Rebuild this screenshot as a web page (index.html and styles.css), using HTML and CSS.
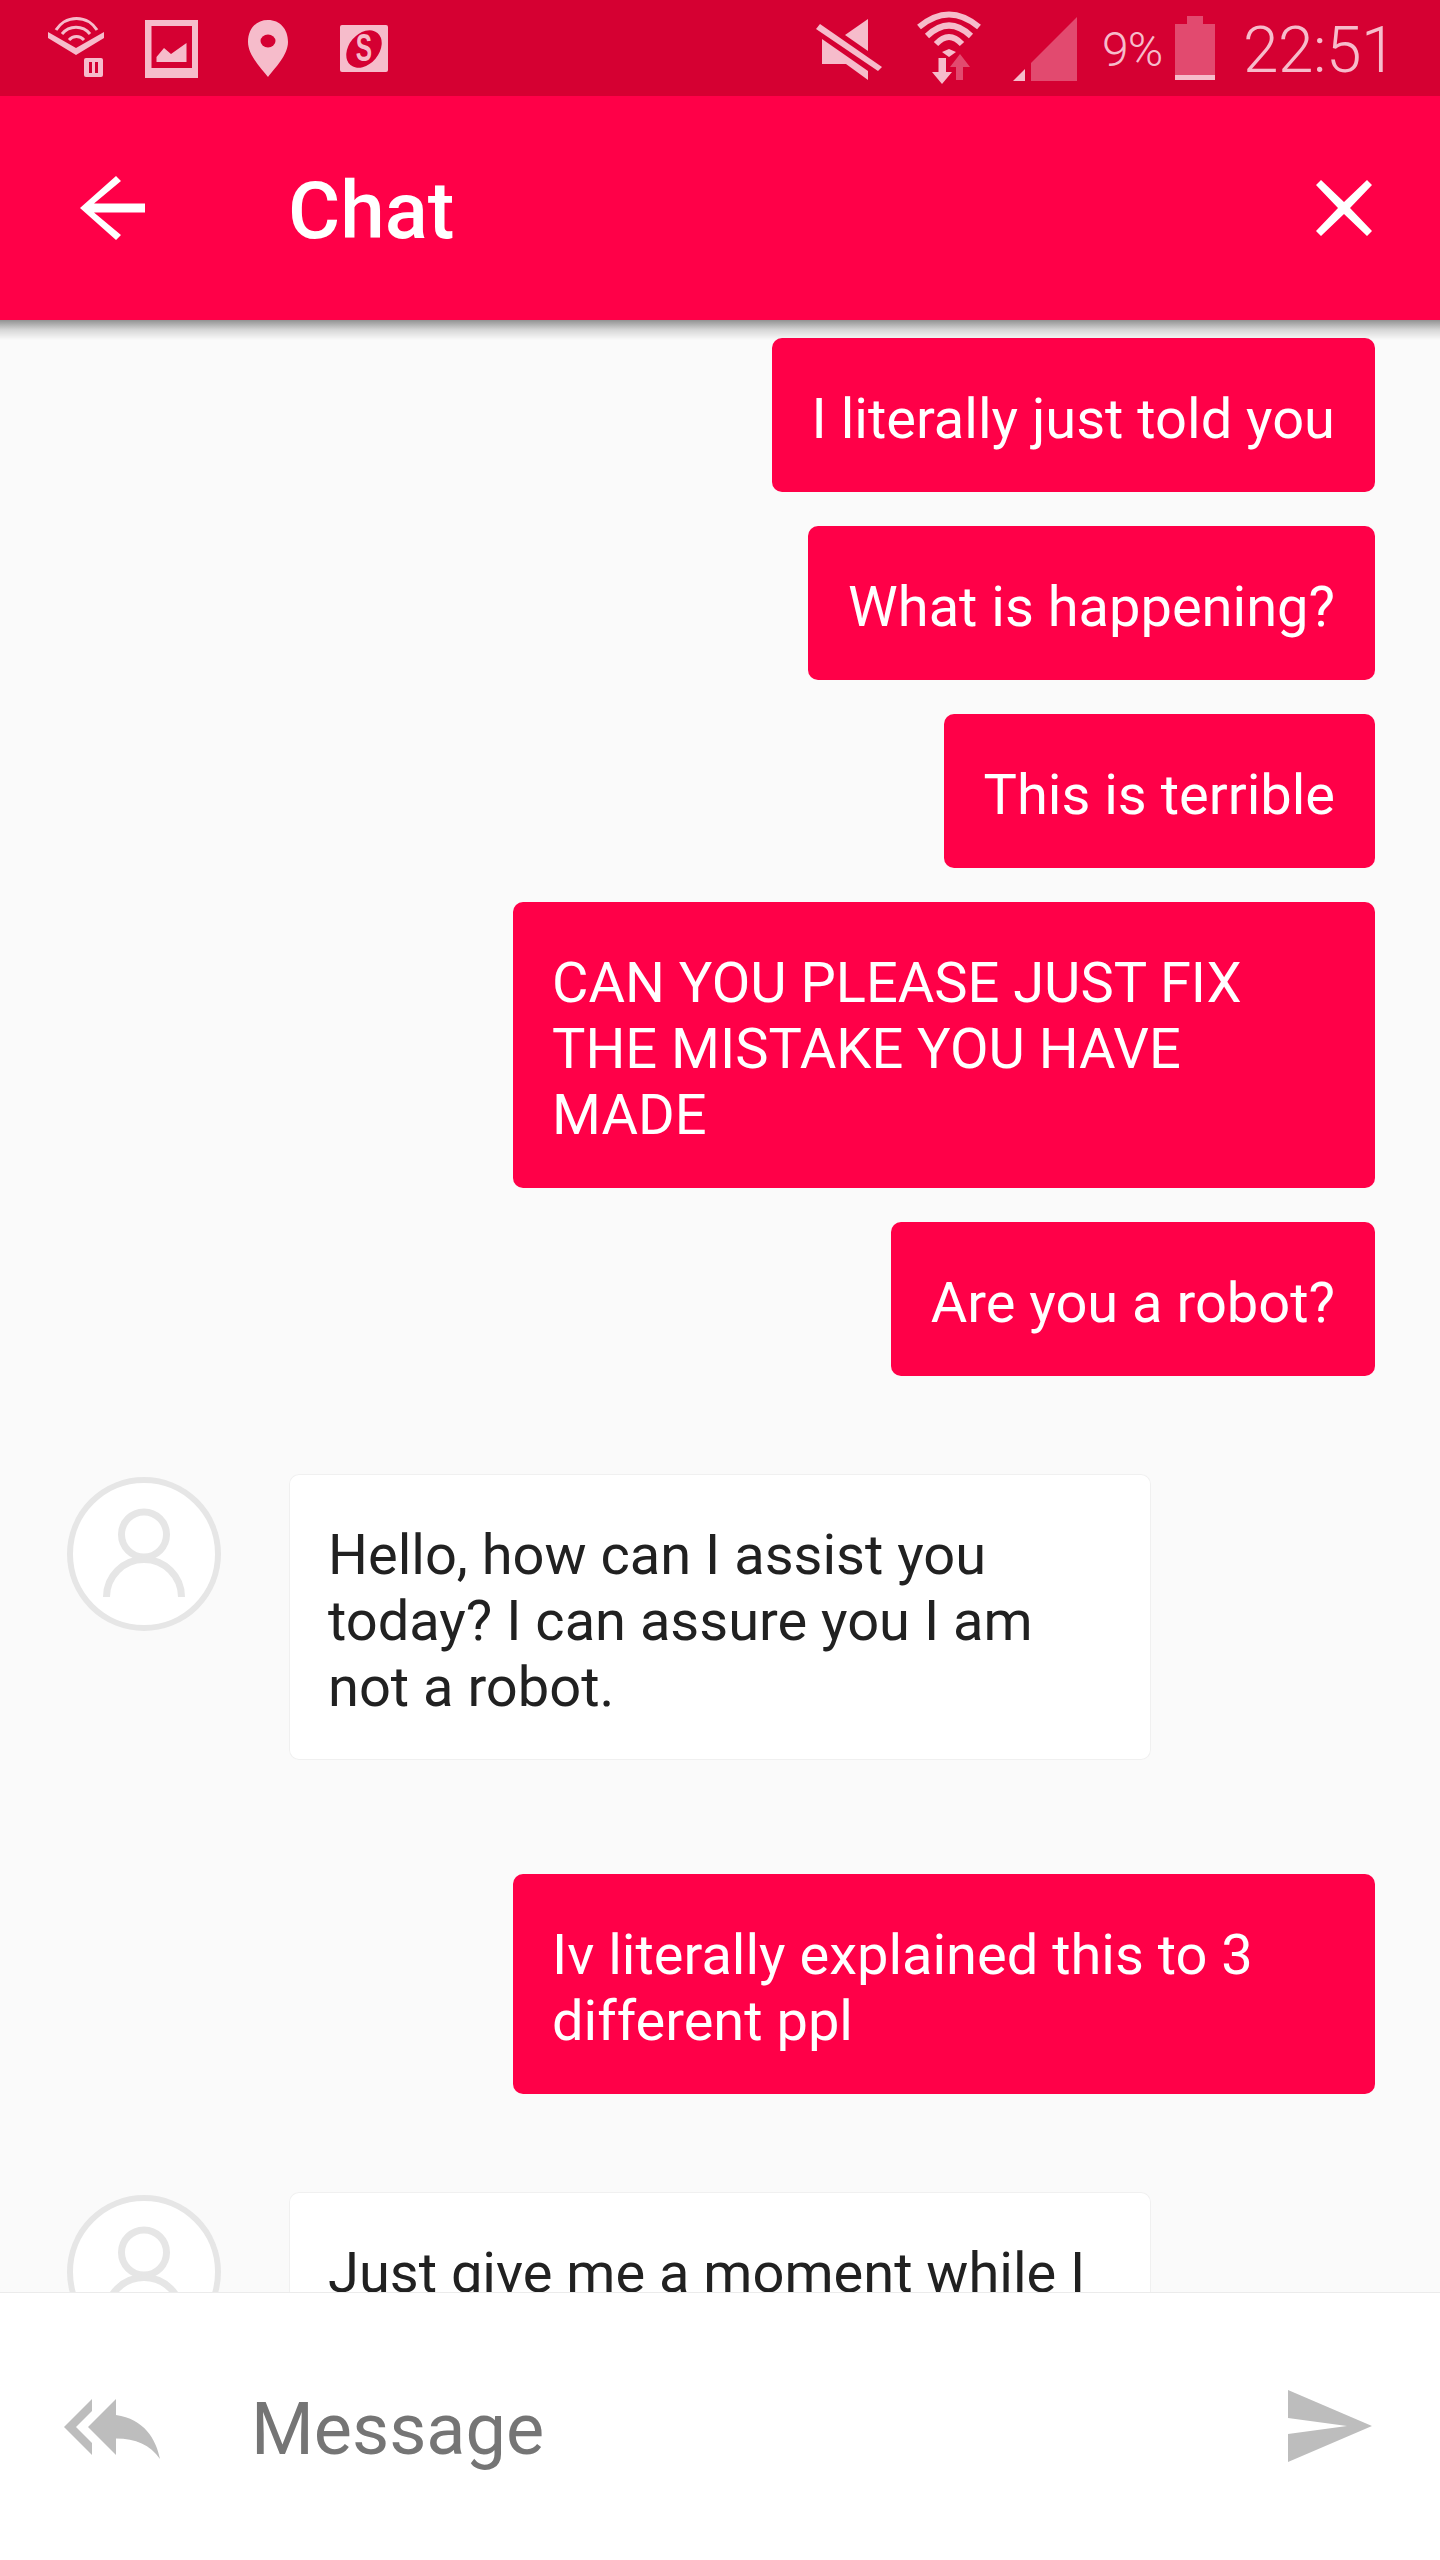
FILE: index.html
```html
<!DOCTYPE html>
<html lang="en">
<head>
<meta charset="utf-8">
<title>Chat</title>
<link rel="stylesheet" href="styles.css">
</head>
<body>
<div class="screen">
  <div class="statusbar">
    <div class="status-left">
      <svg class="i-audible" width="56" height="96" viewBox="0 0 56 96">
        <polygon class="pale" points="0,32 28,48 56,32 56,38 28,55 0,38"/>
        <path class="pale-line" d="M8 30 A24 24 0 0 1 49 30" stroke-width="3"/>
        <path class="pale-line" d="M14 34 A18 18 0 0 1 42 34" stroke-width="3"/>
        <path class="pale-line" d="M21 40 A10 10 0 0 1 36 40" stroke-width="3"/>
        <rect class="pale" x="36" y="58" width="19" height="19" rx="2"/>
        <rect class="bar" x="41" y="62" width="3" height="11"/>
        <rect class="bar" x="47" y="62" width="3" height="11"/>
      </svg>
      <svg class="i-image" width="53" height="96" viewBox="0 0 53 96">
        <rect class="pale" x="0" y="20" width="53" height="58"/>
        <rect class="bar" x="6.500" y="26" width="40.500" height="42"/>
        <polygon class="pale" points="11.500,57 19,48 26,54 41.500,43 41.500,62 11.500,62"/>
      </svg>
      <svg class="i-pin" width="40" height="96" viewBox="0 0 40 96">
        <path class="pale" d="M20 20C32 20 40 29 40 42C40 55 27 68 20 77C13 68 0 55 0 42C0 29 8 20 20 20Z"/>
        <ellipse class="bar" cx="20" cy="41" rx="7.500" ry="6.500"/>
      </svg>
      <svg class="i-card" width="48" height="96" viewBox="0 0 48 96">
        <rect class="pale" x="0" y="25" width="48" height="47" rx="2"/>
        <ellipse class="bar" cx="24" cy="49" rx="21" ry="15" transform="rotate(-50 24 49)"/>
        <text class="card-s" transform="translate(24 61) scale(.72 1.15)">S</text>
      </svg>
    </div>
    <div class="status-right">
      <svg class="i-mute" width="66" height="96" viewBox="0 0 66 96">
        <polygon class="pale" points="6,39 52,71 52,80 30,64 6,64"/>
        <polygon class="pale" points="29,35 52,19 52,51"/>
        <polygon class="pale" points="4,24 66,67 62,71 0,29"/>
      </svg>
      <svg class="i-wifi" width="66" height="96" viewBox="0 0 66 96">
        <path class="pale-line" d="M3 27 Q33 2 63 27" stroke-width="6"/>
        <path class="pale-line" d="M11 36 Q33 15 55 36" stroke-width="6"/>
        <path class="pale-line" d="M20 44 Q33 30 46 44" stroke-width="6"/>
        <polygon class="pale" points="26,52 33,49 40,52 33,57"/>
        <polygon class="pale" points="22.500,58 30,58 30,72 36,72 26,84 16,72 22.500,72"/>
        <polygon class="dim" points="44,54 54,67 47,67 47,80 40,80 40,67 34,67"/>
      </svg>
      <svg class="i-signal" width="64" height="96" viewBox="0 0 64 96">
        <polygon class="pale" points="0,81 12,69 12,81"/>
        <polygon class="dim" points="18,63 64,17 64,81 18,81"/>
      </svg>
      <span class="pct">9%</span>
      <svg class="i-battery" width="40" height="96" viewBox="0 0 40 96">
        <polygon class="dim" points="12,16 28,16 28,24 40,24 40,75 0,75 0,24 12,24"/>
        <rect class="pale" x="0" y="75" width="40" height="5"/>
      </svg>
      <span class="clock">22:51</span>
    </div>
  </div>

  <header class="appbar">
    <svg class="i-back" width="65" height="64" viewBox="0 0 65 64">
      <polygon class="white" points="36,0 41,5 14,27.500 65,27.500 65,36.500 14,36.500 41,59 36,64 0,32"/>
    </svg>
    <h1 class="title">Chat</h1>
    <svg class="i-close" width="56" height="56" viewBox="0 0 56 56">
      <polygon class="white" points="5,0 28,22 51,0 56,5 34,28 56,51 51,56 28,34 5,56 0,51 22,28 0,5"/>
    </svg>
  </header>

  <main class="thread">
    <div class="msg user">I literally just told you</div>
    <div class="msg user">What is happening?</div>
    <div class="msg user">This is terrible</div>
    <div class="msg user wide">CAN YOU PLEASE JUST FIX THE MISTAKE YOU HAVE MADE</div>
    <div class="msg user">Are you a robot?</div>
    <div class="agent-row first">
      <svg class="avatar" width="154" height="154" viewBox="0 0 154 154">
        <circle class="avatar-ring" cx="77" cy="77" r="74" stroke-width="6"/>
        <circle class="avatar-line" cx="77" cy="57.500" r="22.500" stroke-width="7"/>
        <path class="avatar-line" d="M39.500 120A37.500 37.500 0 0 1 114.500 120" stroke-width="7"/>
      </svg>
      <div class="msg agent">Hello, how can I assist you today? I can assure you I am not a robot.</div>
    </div>
    <div class="msg user wide after-agent">Iv literally explained this to 3 different ppl</div>
    <div class="agent-row second">
      <svg class="avatar" width="154" height="154" viewBox="0 0 154 154">
        <circle class="avatar-ring" cx="77" cy="77" r="74" stroke-width="6"/>
        <circle class="avatar-line" cx="77" cy="57.500" r="22.500" stroke-width="7"/>
        <path class="avatar-line" d="M39.500 120A37.500 37.500 0 0 1 114.500 120" stroke-width="7"/>
      </svg>
      <div class="msg agent">Just give me a moment while I look into this for you.</div>
    </div>
  </main>

  <footer class="composer">
    <svg class="i-replyall" width="96" height="96" viewBox="0 0 24 24">
      <path class="grey" d="M7 8V5l-7 7 7 7v-3l-4-4 4-4zm6 1V5l-7 7 7 7v-4.100c5 0 8.500 1.600 11 5.100-1-5-4-10-11-11z"/>
    </svg>
    <span class="placeholder">Message</span>
    <svg class="i-send" width="84" height="72" viewBox="0 0 84 72">
      <polygon class="grey" points="0,0 84,36 0,72 0,44 59,36 0,28"/>
    </svg>
  </footer>
</div>
</body>
</html>
```
FILE: styles.css
```css
* { box-sizing: border-box; }
html, body { margin: 0; padding: 0; }
body { background: #fafafa; font-family: Roboto, "Liberation Sans", sans-serif; }

.screen { width: 1440px; height: 2560px; display: flex; flex-direction: column; overflow: hidden; }

.statusbar { flex: 0 0 96px; height: 96px; background: #d50032; display: flex; justify-content: space-between; padding: 0 57px 0 48px; color: #f6bccb; }
.status-left, .status-right { display: flex; align-items: flex-start; }
.status-left svg, .status-right svg { display: block; flex: none; }
.i-image { margin-left: 41px; }
.i-pin { margin-left: 50px; }
.i-card { margin-left: 52px; }
.i-wifi { margin-left: 34px; }
.i-signal { margin-left: 31px; }
.i-battery { margin-left: 13px; }
.pct { margin-left: 25px; width: 60px; font-size: 48px; font-weight: 300; line-height: 100px; white-space: nowrap; letter-spacing: -1px; }
.clock { margin-left: 28px; width: 140px; font-size: 64px; font-weight: 300; line-height: 102px; white-space: nowrap; letter-spacing: -.5px; }

.pale { fill: #f6bccb; }
.pale-line { fill: none; stroke: #f6bccb; }
.dim { fill: #e24a6f; }
.bar { fill: #d50032; }
.white { fill: #fff; }
.grey { fill: #bdbdbd; }
.card-s { fill: #f6bccb; font-family: "Liberation Sans", sans-serif; font-weight: 700; font-size: 34px; text-anchor: middle; }

.appbar { flex: 0 0 224px; height: 224px; background: #ff0048; display: flex; align-items: center; padding: 0 68px 0 80px; position: relative; z-index: 2; color: #fff; }
.appbar::after { content: ""; position: absolute; left: 0; right: 0; top: 100%; height: 20px; background: linear-gradient(to bottom, rgba(0,0,0,.42), rgba(0,0,0,.14) 50%, rgba(0,0,0,0)); }
.i-back { flex: none; }
.title { margin: 6px 0 0 143px; flex: 1; font-size: 80px; font-weight: 500; line-height: 90px; }
.i-close { flex: none; }

.thread { flex: 1; min-height: 0; overflow: hidden; display: flex; flex-direction: column; gap: 34px; padding: 18px 65px 0 67px; }
.msg { font-size: 56px; line-height: 66px; padding: 48px 40px 40px; border-radius: 10px; flex: none; }
.user { align-self: flex-end; max-width: 862px; background: #ff0048; color: #fff; }
.wide { width: 862px; padding-left: 39px; }
.agent { width: 862px; padding: 48px 40px 40px 39px; background: #fff; color: #212121; box-shadow: inset 0 0 0 1px #f0f0f0; }
.agent-row { display: flex; align-items: flex-start; gap: 68px; flex: none; }
.avatar { flex: none; display: block; margin-top: 3px; }
.avatar-ring { fill: #fff; stroke: #e6e6e6; }
.avatar-line { fill: none; stroke: #e6e6e6; }
.first { margin-top: 64px; }
.second { margin-top: 64px; }
.after-agent { margin-top: 80px; }

.composer { flex: 0 0 268px; height: 268px; background: #fff; border-top: 1px solid #ebebeb; display: flex; align-items: center; padding: 0 68px 0 64px; }
.i-replyall { flex: none; }
.placeholder { margin: 6px 0 0 91px; flex: 1; font-size: 72px; line-height: 82px; color: #757575; }
.i-send { flex: none; margin-top: -2px; }
```
